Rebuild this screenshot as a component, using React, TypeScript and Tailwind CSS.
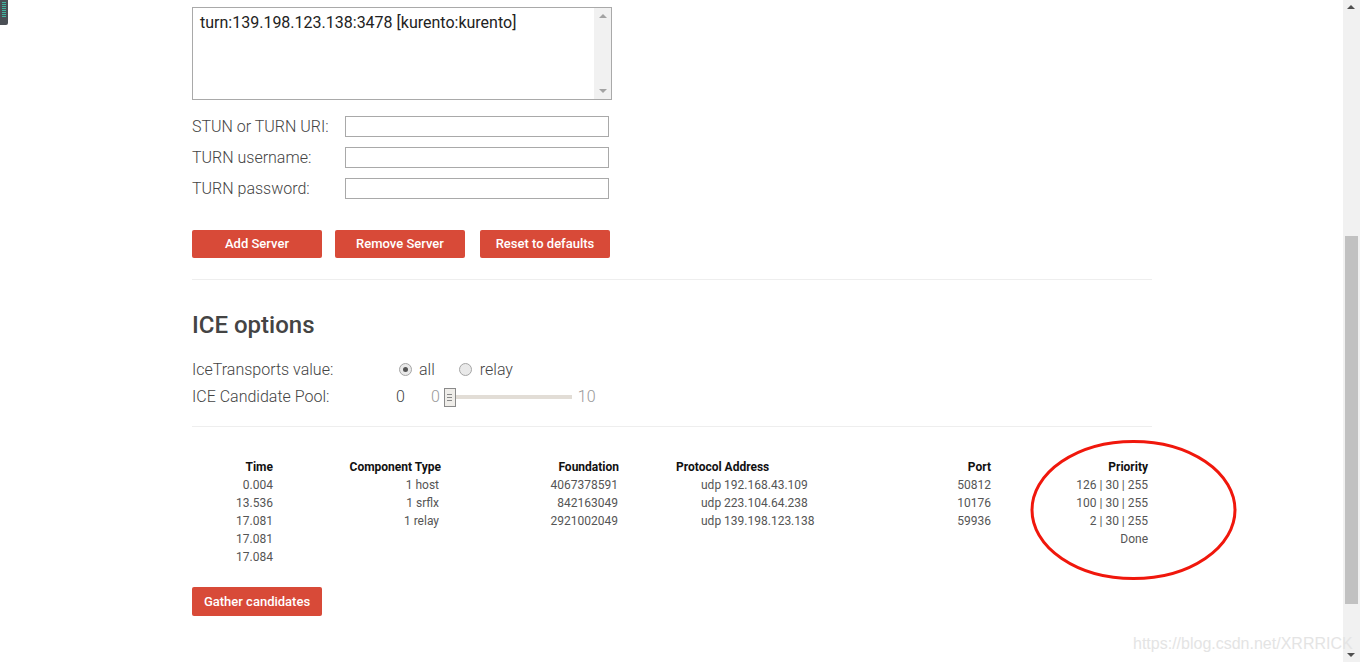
import React from "react";

const ROWS = [
  ["0.004", "1 host", "4067378591", "udp 192.168.43.109", "50812", "126 | 30 | 255"],
  ["13.536", "1 srflx", "842163049", "udp 223.104.64.238", "10176", "100 | 30 | 255"],
  ["17.081", "1 relay", "2921002049", "udp 139.198.123.138", "59936", "2 | 30 | 255"],
  ["17.081", "", "", "", "", "Done"],
  ["17.084", "", "", "", "", ""],
];

function RedButton({ label, className = "" }: { label: string; className?: string }) {
  return (
    <div
      className={`flex items-center justify-center w-[130px] rounded-[2px] bg-[#d84a38] text-white text-[13px] font-medium ${className}`}
    >
      {label}
    </div>
  );
}

function FieldRow({ label }: { label: string }) {
  return (
    <div className="flex items-center h-[31px]">
      <div className="w-[153px] text-[16px] font-light text-[#444]">{label}</div>
      <div className="w-[264px] h-[21px] border border-[#a9a9a9] bg-white" />
    </div>
  );
}

function Radio({ checked }: { checked?: boolean }) {
  return (
    <div className="w-[13px] h-[13px] rounded-full border border-[#a5a5a5] bg-[#e9e9e9] flex items-center justify-center">
      {checked && <div className="w-[5px] h-[5px] rounded-full bg-[#555]" />}
    </div>
  );
}

export default function App() {
  return (
    <div className="relative flex h-[662px] w-full overflow-hidden bg-white" style={{ fontFamily: "Roboto, 'Liberation Sans', sans-serif" }}>
      {/* page */}
      <div className="flex-1 pl-[192px]">
        <div className="w-[960px]">
          {/* server list */}
          <div className="mt-[7px] flex w-[420px] h-[93px] border border-[#a9a9a9]">
            <div className="flex-1 pl-[7px] pt-[3px] text-[16px] text-[#222]">turn:139.198.123.138:3478 [kurento:kurento]</div>
            <div className="w-[17px] bg-[#f1f1f1] flex flex-col items-center justify-between py-[6px]">
              <div className="w-0 h-0 border-l-[4px] border-r-[4px] border-b-[4px] border-l-transparent border-r-transparent border-b-[#a3a3a3]" />
              <div className="w-0 h-0 border-l-[4px] border-r-[4px] border-t-[4px] border-l-transparent border-r-transparent border-t-[#a3a3a3]" />
            </div>
          </div>

          <div className="mt-[11px]">
            <FieldRow label="STUN or TURN URI:" />
            <FieldRow label="TURN username:" />
            <FieldRow label="TURN password:" />
          </div>

          <div className="flex mt-[26px] h-[28px]">
            <RedButton label="Add Server" />
            <RedButton label="Remove Server" className="ml-[13px]" />
            <RedButton label="Reset to defaults" className="ml-[15px]" />
          </div>

          <div className="mt-[21px] h-px bg-[#eee]" />

          <h2 className="mt-[30px] text-[24px] leading-[30px] font-medium text-[#444]">ICE options</h2>

          <div className="mt-[16px] flex items-center h-[27px] text-[16px] font-light text-[#444]">
            <div className="w-[207px]">IceTransports value:</div>
            <Radio checked />
            <span className="ml-[7px]">all</span>
            <div className="ml-[24px]"><Radio /></div>
            <span className="ml-[8px]">relay</span>
          </div>
          <div className="flex items-center h-[28px] text-[16px] font-light text-[#444]">
            <div className="w-[204px]">ICE Candidate Pool:</div>
            <span>0</span>
            <span className="ml-[26px] text-[#999]">0</span>
            <div className="ml-[4px] relative flex items-center">
              <div className="w-[12px] h-[19px] border border-[#8a8a8a] bg-[#efede9] flex flex-col items-center justify-center gap-[2px]">
                <div className="w-[5px] h-px bg-[#888]" />
                <div className="w-[5px] h-px bg-[#888]" />
                <div className="w-[5px] h-px bg-[#888]" />
              </div>
              <div className="w-[116px] h-[4px] bg-[#e2ddd6]" />
            </div>
            <span className="ml-[6px] text-[#999]">10</span>
          </div>

          <div className="mt-[15px] h-px bg-[#eee]" />

          {/* candidates table */}
          <div className="mt-[31px] grid grid-cols-[81px_168px_178px_300px_72px_157px] text-[12px] leading-[18px]">
            <div className="text-right font-bold text-[#111]">Time</div>
            <div className="text-right font-bold text-[#111]">Component Type</div>
            <div className="text-right font-bold text-[#111]">Foundation</div>
            <div className="pl-[57px] font-bold text-[#111]">Protocol Address</div>
            <div className="text-right font-bold text-[#111]">Port</div>
            <div className="text-right font-bold text-[#111]">Priority</div>
            {ROWS.map((r, i) => (
              <React.Fragment key={i}>
                <div className="text-right text-[#555]">{r[0]}</div>
                <div className="text-right pr-[2px] text-[#555]">{r[1]}</div>
                <div className="text-right pr-[1px] text-[#555]">{r[2]}</div>
                <div className="pl-[82px] text-[#555]">{r[3]}</div>
                <div className="text-right text-[#555]">{r[4]}</div>
                <div className="text-right text-[#555]">{r[5]}</div>
              </React.Fragment>
            ))}
          </div>

          <RedButton label="Gather candidates" className="mt-[21px] h-[29px]" />
        </div>
      </div>

      {/* window scrollbar */}
      <div className="w-[17px] h-full bg-[#f1f1f1] relative">
        <div className="absolute left-[2px] top-[236px] w-[13px] h-[368px] bg-[#c1c1c1]" />
        <div className="absolute left-[4px] top-[5px] w-0 h-0 border-l-[4px] border-r-[4px] border-b-[4px] border-l-transparent border-r-transparent border-b-[#505050]" />
        <div className="absolute left-[4px] bottom-[5px] w-0 h-0 border-l-[4px] border-r-[4px] border-t-[4px] border-l-transparent border-r-transparent border-t-[#505050]" />
      </div>

      {/* extension icon at top-left */}
      <div className="absolute left-0 top-0 w-[8px] h-[25px] rounded-br-[2px] bg-[#4a4f55] flex flex-col items-center gap-[1px] pt-[2px]">
        {[0, 1, 2, 3, 4, 5, 6, 7].map((k) => (
          <div key={k} className="w-[4px] h-px bg-[#3fb6a0]" />
        ))}
      </div>

      {/* red annotation ellipse */}
      <svg className="absolute left-[1028px] top-[437px]" width="212" height="146" viewBox="0 0 212 146">
        <ellipse cx="105.5" cy="73" rx="101.5" ry="68.5" fill="none" stroke="#f0170c" strokeWidth="3" />
      </svg>

      {/* watermark */}
      <div
        className="absolute left-[1133px] top-[632px] text-[16px] text-[#e4e4e4] whitespace-nowrap"
        style={{ fontFamily: "'Liberation Sans', Arial, sans-serif" }}
      >
        https://blog.csdn.net/XRRRICK
      </div>
    </div>
  );
}
